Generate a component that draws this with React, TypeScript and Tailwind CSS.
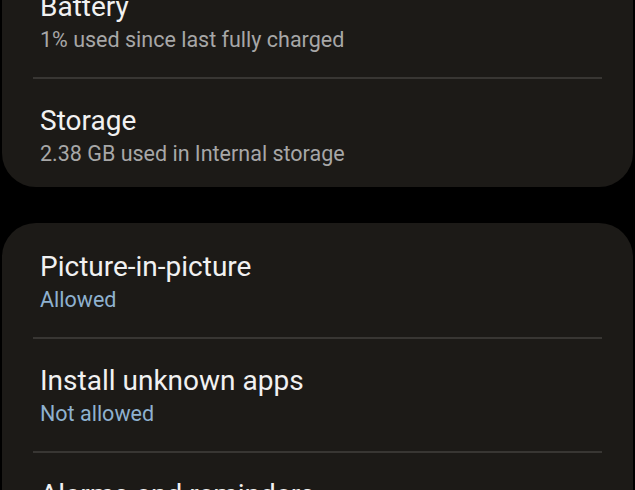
type Item = { title: string; sub: string; accent?: boolean }

const appInfo: Item[] = [
  { title: 'Battery', sub: '1% used since last fully charged' },
  { title: 'Storage', sub: '2.38 GB used in Internal storage' },
]

const advanced: Item[] = [
  { title: 'Picture-in-picture', sub: 'Allowed', accent: true },
  { title: 'Install unknown apps', sub: 'Not allowed', accent: true },
  { title: 'Alarms and reminders', sub: 'Allowed', accent: true },
]

function Row({ item, first, last, pt }: { item: Item; first: boolean; last: boolean; pt: string }) {
  return (
    <div>
      {!first && <div className="mx-[31px] h-[2px] bg-[#383633]" />}
      <div className={`px-[38px] ${pt} ${last ? 'pb-[17px]' : 'pb-[21px]'}`}>
        <p className="text-[28px] leading-[33px] text-[#f1f1f1]">{item.title}</p>
        <p className={`text-[21.5px] leading-[33px] ${item.accent ? 'text-[#8eb1cf]' : 'text-[#a7a7a7]'}`}>
          {item.sub}
        </p>
      </div>
    </div>
  )
}

function Card({ items, className }: { items: Item[]; className?: string }) {
  return (
    <div className={`mx-[2px] rounded-[34px] bg-[#1c1a17] ${className ?? ''}`}>
      {items.map((item, i) => (
        <Row
          key={item.title}
          item={item}
          first={i === 0}
          last={i === items.length - 1}
          pt={i === 0 ? 'pt-[27px]' : 'pt-[25px]'}
        />
      ))}
    </div>
  )
}

export default function App() {
  return (
    <div className="h-[490px] overflow-hidden bg-black font-['Roboto',sans-serif]">
      <Card items={appInfo} className="-mt-[37px]" />
      <Card items={advanced} className="mt-[36px]" />
    </div>
  )
}
